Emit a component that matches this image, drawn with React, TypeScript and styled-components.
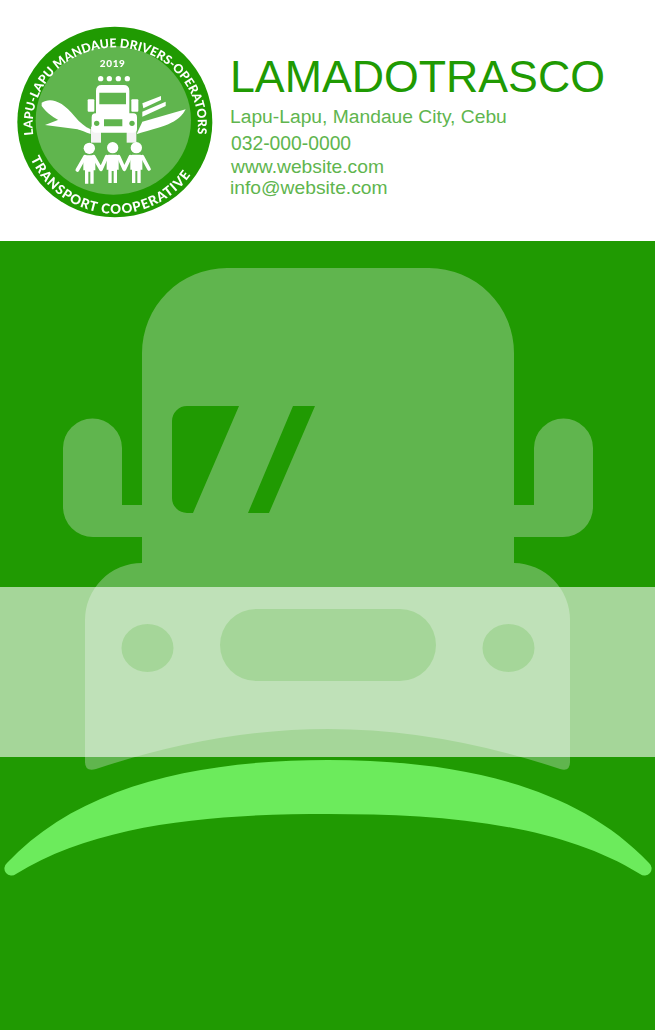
import React from "react";
import styled, { createGlobalStyle } from "styled-components";

const Global = createGlobalStyle`
  html, body { margin: 0; padding: 0; background: #209a02; }
  body { font-family: "Liberation Sans", Arial, sans-serif; }
`;
const Page = styled.div`width: 655px; height: 1030px; overflow: hidden; display: flex; flex-direction: column;`;
const Header = styled.header`height: 241px; background: #fff; display: flex; align-items: flex-start; padding: 26px 0 0 17px; box-sizing: border-box;`;
const Logo = styled.svg`width: 196px; height: 192px; flex: none; display: block; filter: blur(0.45px);`;
const Info = styled.div`margin-left: 17px; padding-top: 25px; display: flex; flex-direction: column; color: #60b54e;`;
const Title = styled.h1`margin: 0; font-weight: 400; font-size: 44.7px; line-height: 52px; color: #209a02; white-space: nowrap;`;
const Line = styled.div<{ $size: number; $h: number; $x?: number }>`
  font-size: ${p => p.$size}px; line-height: ${p => p.$h}px; margin-left: ${p => p.$x ?? 0}px; white-space: nowrap;
`;
const Hero = styled.main`position: relative; flex: 1; background: #209a02;`;
const Art = styled.svg`display: block; width: 655px; height: 789px;`;
const Band = styled.div`position: absolute; left: 0; right: 0; top: 346px; height: 170px; background: rgba(255,255,255,.6);`;

const truck = `M227 268 H429 A85 85 0 0 1 514 353 V505 H534 V448 A29.500 29.500 0 0 1 593 448 V507 A30 30 0 0 1 563 537 H514 V563
A57 57 0 0 1 570 620 V762 Q570 772 560 769 Q440 729 328 729 Q216 729 96 769 Q85 772 85 762 V620 A57 57 0 0 1 142 563 V537 H93 A30 30 0 0 1 63 507 V448 A29.500 29.500 0 0 1 122 448 V505 H142 V353 A85 85 0 0 1 227 268 Z
M187 406 H239 L193 513 H187 A15 15 0 0 1 172 498 V421 A15 15 0 0 1 187 406 Z
M293 406 H315 L269 513 H248 Z
M256 609 H400 A36 36 0 0 1 400 681 H256 A36 36 0 0 1 256 609 Z
M121.500 648 A26 24 0 0 1 173.500 648 A26 24 0 0 1 121.500 648 Z
M482.500 648 A26 24 0 0 1 534.500 648 A26 24 0 0 1 482.500 648 Z`;

const swoosh = `M7 863 C80 785 200 760 328 760 C456 760 576 785 649 863 A6.500 6.500 0 0 1 640 874 C556 822 436 814 328 814 C220 814 100 822 16 874 A6.500 6.500 0 0 1 7 863 Z`;

const Person = ({ cx, cy }: { cx: number; cy: number }) => (
  <>
    <circle cx={cx} cy={cy} r="17" />
    <path d={`M${cx - 12} ${cy + 21} H${cx + 12} Q${cx + 18} ${cy + 21} ${cx + 18} ${cy + 27} V${cy + 66} H${cx + 13} V${cy + 106} H${cx + 3} V${cy + 70} H${cx - 3} V${cy + 106} H${cx - 13} V${cy + 66} H${cx - 18} V${cy + 27} Q${cx - 18} ${cy + 21} ${cx - 12} ${cy + 21}Z`} />
  </>
);

const LogoArt = () => (
  <Logo viewBox="51 48 588 576">
    <ellipse cx="344.500" cy="336" rx="292.500" ry="286" fill="#209a02" />
    <ellipse cx="340" cy="331" rx="233" ry="223" fill="#60b54e" />
    <defs>
      <path id="ringTop" d="M100 375 A248 232 0 1 1 590 385" />
      <path id="ringBottom" d="M92 446 A278 278 0 0 0 600 446" />
    </defs>
    <g fontFamily="Lato, sans-serif" fontWeight="900" fill="#fff">
      <text fontSize="37" letterSpacing="0.3"><textPath href="#ringTop">LAPU-LAPU MANDAUE DRIVERS-OPERATORS</textPath></text>
      <text fontSize="40" letterSpacing="3"><textPath href="#ringBottom">TRANSPORT COOPERATIVE</textPath></text>
      <text x="338" y="172" fontSize="30" textAnchor="middle" letterSpacing="2">2019</text>
    </g>
    <g fill="#fff">
      <circle cx="302" cy="206" r="8" /><circle cx="328" cy="206" r="8" /><circle cx="355" cy="206" r="8" /><circle cx="382" cy="206" r="8" />
      <path d="M125 278 C150 262 185 270 225 320 C240 338 255 350 272 358 L272 372 C215 350 155 330 125 288Z" />
      <path d="M135 345 L195 322 L250 360 Z" />
      <path d="M427 335 L557 298 C537 335 510 345 410 372 Z" />
      <path d="M427 280 L483 258 V270 L430 295 Z" />
      <path d="M427 305 L497 275 V288 L427 320 Z" />
      <rect x="263" y="268" width="20" height="37" rx="3" /><rect x="394" y="268" width="21" height="37" rx="3" />
      <rect x="273" y="350" width="30" height="48" fill="#f3f3f3" /><rect x="380" y="350" width="29" height="48" fill="#f3f3f3" />
      <path fillRule="evenodd" d="M305 225 H371 Q388 225 388 242 V310 H400 Q411 310 411 322 V356 Q411 368 399 368 H287 Q275 368 275 356 V322 Q275 310 287 310 H288 V242 Q288 225 305 225Z M298 248 V283 H378 V248Z M312 328 V349 H367 V328Z" />
      <circle cx="290" cy="340" r="8" fill="#60b54e" /><circle cx="396" cy="340" r="8" fill="#60b54e" />
      <Person cx={268} cy={415} /><Person cx={338} cy={413} /><Person cx={409} cy={413} />
    </g>
    <path d="M255 440 L232 480 M281 440 L303 478 L320 440 M356 440 L373 478 L391 440 M427 440 L447 477" fill="none" stroke="#fff" strokeWidth="11" strokeLinecap="round" strokeLinejoin="round" />
  </Logo>
);

export default function App() {
  return (
    <>
      <Global />
      <Page>
        <Header>
          <LogoArt />
          <Info>
            <Title>LAMADOTRASCO</Title>
            <Line $size={19.250} $h={27}>Lapu-Lapu, Mandaue City, Cebu</Line>
            <Line $size={19.300} $h={28} $x={1}>032-000-0000</Line>
            <Line $size={19.250} $h={17} $x={1}>www.website.com</Line>
            <Line $size={19.250} $h={26}>info@website.com</Line>
          </Info>
        </Header>
        <Hero>
          <Art viewBox="0 241 655 789">
            <path d={truck} fill="#60b54e" fillRule="evenodd" />
            <path d={swoosh} fill="#6ceb5c" />
          </Art>
          <Band />
        </Hero>
      </Page>
    </>
  );
}
